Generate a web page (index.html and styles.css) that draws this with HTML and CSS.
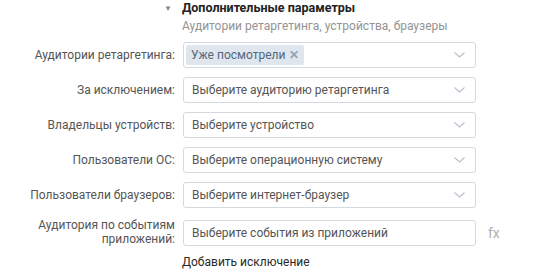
FILE: index.html
```html
<!DOCTYPE html>
<html>
<head>
    <title>Дополнительные параметры</title>
    <link rel="stylesheet" href="styles.css">
</head>
<body>
    <div class="params">
        <div class="head-arrow">&#9660;</div>
        <div class="head">
            <div class="head-title">Дополнительные параметры</div>
            <div class="head-sub">Аудитории ретаргетинга, устройства, браузеры</div>
        </div>
        <div></div>

        <label class="row-label">Аудитории ретаргетинга:</label>
        <div class="select">
            <span class="tag">Уже посмотрели <span class="tag-x">&#10005;</span></span>
            <svg class="chevron" width="11" height="6" viewBox="0 0 11 6"><path d="M0.5 0.5 L5.5 5 L10.5 0.5" fill="none" stroke="#b7c0cb" stroke-width="1.1"/></svg>
        </div>
        <div></div>

        <label class="row-label">За исключением:</label>
        <div class="select">
            <span class="placeholder">Выберите аудиторию ретаргетинга</span>
            <svg class="chevron" width="11" height="6" viewBox="0 0 11 6"><path d="M0.5 0.5 L5.5 5 L10.5 0.5" fill="none" stroke="#b7c0cb" stroke-width="1.1"/></svg>
        </div>
        <div></div>

        <label class="row-label">Владельцы устройств:</label>
        <div class="select">
            <span class="placeholder">Выберите устройство</span>
            <svg class="chevron" width="11" height="6" viewBox="0 0 11 6"><path d="M0.5 0.5 L5.5 5 L10.5 0.5" fill="none" stroke="#b7c0cb" stroke-width="1.1"/></svg>
        </div>
        <div></div>

        <label class="row-label">Пользователи ОС:</label>
        <div class="select">
            <span class="placeholder">Выберите операционную систему</span>
            <svg class="chevron" width="11" height="6" viewBox="0 0 11 6"><path d="M0.5 0.5 L5.5 5 L10.5 0.5" fill="none" stroke="#b7c0cb" stroke-width="1.1"/></svg>
        </div>
        <div></div>

        <label class="row-label">Пользователи браузеров:</label>
        <div class="select">
            <span class="placeholder">Выберите интернет-браузер</span>
            <svg class="chevron" width="11" height="6" viewBox="0 0 11 6"><path d="M0.5 0.5 L5.5 5 L10.5 0.5" fill="none" stroke="#b7c0cb" stroke-width="1.1"/></svg>
        </div>
        <div></div>

        <label class="row-label row-label-wrap">Аудитория по событиям приложений:</label>
        <div class="select select-last">
            <span class="placeholder">Выберите события из приложений</span>
        </div>
        <div class="fx">fx</div>

        <div></div>
        <div class="add-link">Добавить исключение</div>
        <div></div>
    </div>
</body>
</html>
```

FILE: styles.css
```css
body {
    margin: 0;
    font-family: Roboto, "Noto Sans", Arial, sans-serif;
    font-size: 12px;
    color: #555;
    background: #fff;
}

.params {
    display: grid;
    grid-template-columns: 175px 293px 1fr;
    column-gap: 8px;
    row-gap: 9px;
    align-items: center;
}

.head-arrow {
    align-self: start;
    text-align: right;
    font-size: 8px;
    color: #828a94;
    padding-top: 4px;
    padding-right: 3px;
}

.head {
    margin-left: -1px;
    margin-bottom: -1px;
}

.head-title {
    font-weight: bold;
    font-size: 12.5px;
    color: #222;
    line-height: 15px;
}

.head-sub {
    color: #939393;
    line-height: 16px;
    margin-top: 3px;
}

.row-label {
    text-align: right;
    color: #555;
}

.row-label-wrap {
    line-height: 14px;
    padding-left: 30px;
}

.select {
    height: 26px;
    box-sizing: border-box;
    border: 1px solid #d3d9de;
    border-radius: 3px;
    display: flex;
    align-items: center;
    padding: 0 10px 0 8px;
}

.select-last {
    margin-top: 3px;
}

.placeholder {
    color: #555;
    flex: 1;
}

.tag {
    background: #dfe6ee;
    color: #55677d;
    border-radius: 2px;
    padding: 3px 5px 3px 5px;
    margin-left: -6px;
    white-space: nowrap;
}

.tag-x {
    color: #93a3b5;
    font-size: 12px;
    font-weight: bold;
    margin-left: 1px;
}

.tag + .chevron {
    margin-left: auto;
}

.chevron {
    flex: none;
}

.fx {
    color: #b0b0b0;
    margin-left: 4px;
    margin-top: 3px;
    font-size: 14px;
}

.add-link {
    color: #2a2a2a;
    margin-left: -1px;
    margin-top: 0;
}
```
